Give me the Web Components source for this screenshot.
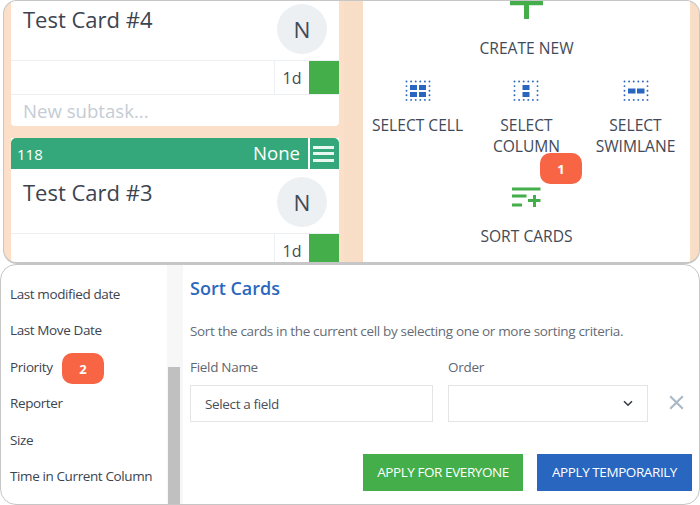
<!DOCTYPE html>
<html><head><meta charset="utf-8">
<style>
html,body{margin:0;padding:0;background:#fff}
body{width:700px;height:505px;overflow:hidden;font-family:"Open Sans","Noto Sans",sans-serif;color:#3c4450;display:flex;flex-direction:column}
</style></head><body>
<template id="t-panel"><style>
:host{display:flex;justify-content:space-between;flex:none;height:264px;box-sizing:border-box;margin-left:3px;border:1px solid #c6c6c6;border-bottom-width:2px;border-radius:14px;background:linear-gradient(90deg,#fcdfc9 0 340px,#f8dec7 340px);overflow:hidden;position:relative}
.l{width:328px;margin-left:7px;display:flex;flex-direction:column;gap:12px}
.r{width:327px;margin-right:9px;background:#fff}
</style><div class="l"><slot name="cards"></slot></div><div class="r"><slot name="actions"></slot></div><slot name="badge"></slot></template>

<template id="t-card"><style>
:host{display:block;flex:none;background:#fff;border-radius:0 0 4px 4px;overflow:hidden}
.head{display:none;height:31px;background:#34a87b;color:#fff;align-items:center;border-radius:5px 5px 0 0;margin-bottom:1px}
:host([number]) .head{display:flex}
.num{margin-left:6px;flex:1;font-size:15px}
.prio{font-size:18.6px;margin-right:8px;line-height:28px;padding-bottom:2px}
.menu{width:31px;height:31px;border-left:2px solid #fff;display:flex;flex-direction:column;justify-content:center;gap:3.5px;align-items:center;box-sizing:border-box;padding-right:2px}
.menu i{display:block;width:21px;height:3px;background:#e9f7f1}
.main{display:flex;justify-content:space-between;height:59px;border-bottom:1px solid #ecf0f3}
:host([number]) .main{height:63px}
.title{font-size:22px;line-height:26px;margin:5px 0 0 12px;color:#3c4450}
:host([number]) .title{margin-top:9px}
.ava{width:50px;height:50px;border-radius:50%;background:#edf0f3;margin:3px 12px 0 0;display:flex;align-items:center;justify-content:center;font-size:22.5px;color:#434a57}
:host([number]) .ava{margin-top:7px}
.row{display:flex;justify-content:flex-end;height:33px;border-bottom:1px solid #ecf0f3}
.age{width:34px;border-left:1px solid #ecf0f3;display:flex;align-items:center;justify-content:center;font-size:16px;color:#434a57}
.flag{width:30px;background:#43ae4a}
.new{height:31px;display:flex;align-items:center;padding-left:12px;font-size:18.6px;color:#c5ccd4}
</style><div class="head"><span class="num"></span><span class="prio">None</span><span class="menu"><i></i><i></i><i></i></span></div>
<div class="main"><span class="title"></span><span class="ava">N</span></div>
<div class="row"><span class="age">1d</span><span class="flag"></span></div>
<div class="new"><slot></slot></div></template>

<template id="t-actions"><style>
:host{display:grid;grid-template-columns:109px 109px 109px;grid-template-rows:69px 117px 75px;justify-items:center;font-size:15.6px;color:#434a57;text-align:center;line-height:21px}
</style><slot></slot></template>

<template id="t-action"><style>
:host{display:flex;flex-direction:column;align-items:center;text-align:center}
:host([wide]){grid-column:1 / 4}
.ic{display:flex;align-items:flex-start;justify-content:center}
</style><div class="ic"><slot name="icon"></slot></div><div class="txt"><slot></slot></div></template>

<template id="t-bubble"><style>
:host{position:absolute;display:flex;align-items:center;justify-content:center;width:42px;height:31px;border-radius:10px;background:#f76545;color:#fff;font-family:"Open Sans",sans-serif;font-weight:700;font-size:13px}
</style><slot></slot></template>

<template id="t-dialog"><style>
:host{display:flex;flex:none;box-sizing:border-box;height:241px;border:1px solid #c6c6c6;border-radius:16px;overflow:hidden;position:relative;background:#fff}
.side{width:166px;flex:none}
.bar{width:16px;flex:none;background:#f7f7f7;display:flex;flex-direction:column;justify-content:flex-end}
.bar i{display:block;height:137px;width:12px;background:#c0c0c0;margin-left:1px}
.main{flex:1;min-width:0}
</style><div class="side"><slot name="side"></slot></div><div class="bar"><i></i></div><div class="main"><slot></slot></div><slot name="badge"></slot></template>

<template id="t-list"><style>
:host{display:flex;flex-direction:column;padding:11px 0 0 9px;font-size:13.5px;letter-spacing:-.39px;color:#3c4450;line-height:36.4px}
</style><slot></slot></template>

<template id="t-form"><style>
:host{display:flex;flex-direction:column;padding:11px 0 0 7px;color:#5f6670}
h2{margin:0;font-size:18px;font-weight:600;color:#2b67be;line-height:24px}
p{margin:22px 0 0;font-size:13.5px;letter-spacing:-.34px;line-height:18px;color:#666c75}
.fields{display:flex;margin-top:18px;align-items:flex-start}
.f{display:flex;flex-direction:column;gap:9px;font-size:13.5px;letter-spacing:-.3px;line-height:18px}
.f1{width:243px;margin-right:15px}.f2{width:200px}
.in{box-sizing:border-box;height:37px;border:1px solid #e2e4e6;display:flex;align-items:center;padding-left:14px;font-size:13.5px;letter-spacing:-.36px;color:#4a505a;position:relative;background:#fff}
.in svg{position:absolute;right:14px;top:14px}
.x{margin:37px 0 0 21px}
.btns{display:flex;margin-top:32px;justify-content:flex-end;gap:14px;margin-right:7px}
.b{height:37px;display:flex;align-items:center;justify-content:center;color:#fff;font-size:13.5px;letter-spacing:-.42px;box-sizing:border-box;padding-bottom:2px}
.g{width:160px;background:#43ae4a}.u{width:155px;background:#2866bf}
</style><h2>Sort Cards</h2><p>Sort the cards in the current cell by selecting one or more sorting criteria.</p>
<div class="fields"><div class="f f1"><span>Field Name</span><div class="in">Select a field</div></div>
<div class="f f2"><span>Order</span><div class="in"><svg width="10" height="7" viewBox="0 0 10 7"><path d="M1 1.2 5 5.2 9 1.2" fill="none" stroke="#3a3f47" stroke-width="1.6"/></svg></div></div>
<svg class="x" width="15" height="15" viewBox="0 0 15 15"><path d="M1.2 1.2 13.8 13.8M13.8 1.2 1.2 13.8" stroke="#abbac6" stroke-width="2.2" fill="none"/></svg></div>
<div class="btns"><div class="b g">APPLY FOR EVERYONE</div><div class="b u">APPLY TEMPORARILY</div></div></template>

<kb-panel>
  <kb-card slot="cards" title="Test Card #4">New subtask...</kb-card>
  <kb-card slot="cards" number="118" title="Test Card #3"></kb-card>
  <kb-actions slot="actions">
    <kb-action wide>
      <svg slot="icon" width="33" height="18" viewBox="0 0 33 18" style="display:block"><path d="M0 1.8H33M16.5 0V18" stroke="#43ae4a" stroke-width="5" fill="none"/></svg>
      <span style="display:block;margin-top:19px">CREATE NEW</span>
    </kb-action>
    <kb-action><dot-icon slot="icon" kind="cell"></dot-icon><span>SELECT CELL</span></kb-action>
    <kb-action><dot-icon slot="icon" kind="col"></dot-icon><span>SELECT<br>COLUMN</span></kb-action>
    <kb-action><dot-icon slot="icon" kind="lane"></dot-icon><span>SELECT<br>SWIMLANE</span></kb-action>
    <kb-action wide>
      <svg slot="icon" width="29" height="21" viewBox="0 0 29 21" style="display:block"><path d="M0 2H28.5M0 9H14.5M0 18H10M16 13.5H28.5M22.5 8V20" stroke="#43ae4a" stroke-width="3" fill="none"/></svg>
      <span style="display:block;margin-top:17.5px">SORT CARDS</span>
    </kb-action>
  </kb-actions>
  <kb-bubble slot="badge" style="left:536px;top:152px">1</kb-bubble>
</kb-panel>
<kb-dialog>
  <kb-list slot="side"><span>Last modified date</span><span>Last Move Date</span><span>Priority</span><span>Reporter</span><span>Size</span><span>Time in Current Column</span></kb-list>
  <kb-form></kb-form>
  <kb-bubble slot="badge" style="left:61px;top:88px">2</kb-bubble>
</kb-dialog>
<script>
function plain(name,tpl,extra){customElements.define(name,class extends HTMLElement{constructor(){super();this.attachShadow({mode:'open'}).appendChild(document.getElementById(tpl).content.cloneNode(true));}connectedCallback(){extra&&extra(this)}})}
plain('kb-panel','t-panel');
plain('kb-card','t-card',e=>{e.shadowRoot.querySelector('.title').textContent=e.getAttribute('title');e.removeAttribute('title');const n=e.getAttribute('number');if(n)e.shadowRoot.querySelector('.num').textContent=n;if(!e.textContent.trim())e.shadowRoot.querySelector('.new').style.display='none';});
plain('kb-actions','t-actions');plain('kb-action','t-action');plain('kb-bubble','t-bubble');plain('kb-dialog','t-dialog');plain('kb-list','t-list');plain('kb-form','t-form');
customElements.define('dot-icon',class extends HTMLElement{constructor(){super();const r=this.attachShadow({mode:'open'});
const k=this.getAttribute('kind');let s='';
for(let i=0;i<6;i++){const x=1.5+i*4.6;s+=`<circle cx="${x}" cy="1.5" r=".95"/><circle cx="${x}" cy="19.9" r=".95"/>`}
for(const y of [6.1,10.7,15.3]){s+=`<circle cx="1.5" cy="${y}" r=".95"/><circle cx="24.5" cy="${y}" r=".95"/>`}
let rects=[];
if(k=='cell')rects=[[5,5,7,5],[14,5,7,5],[5,12,7,5],[14,12,7,5]];
if(k=='col')rects=[[9.5,5,7,5],[9.5,12,7,5]];
if(k=='lane')rects=[[5,8.5,7.5,5],[14,8.5,7.5,5]];
for(const q of rects)s+=`<rect x="${q[0]}" y="${q[1]}" width="${q[2]}" height="${q[3]}"/>`;
r.innerHTML=`<style>:host{display:block;height:22px;margin:10px 0 12.5px}svg{display:block}</style><svg width="26" height="22" viewBox="0 0 26 22" fill="#2866bf">${s}</svg>`;}});
</script>
</body></html>
